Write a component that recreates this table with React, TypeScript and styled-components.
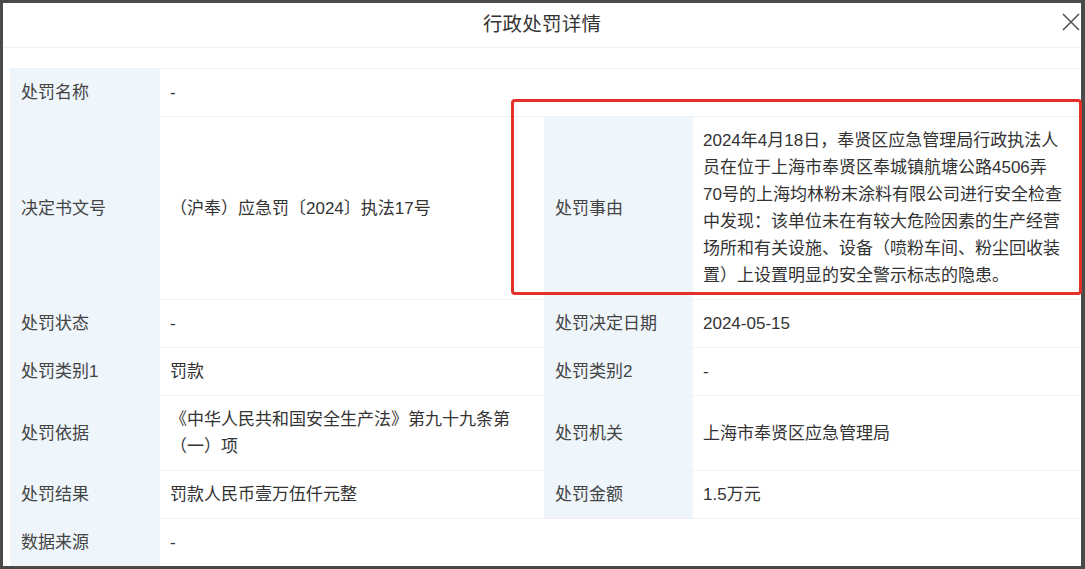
import styled, { createGlobalStyle } from "styled-components";

const GlobalStyle = createGlobalStyle`
  html, body {
    margin: 0;
    padding: 0;
    background: #4a4a4a;
    overflow: hidden;
  }
  body {
    font-family: "Liberation Sans", "Noto Sans CJK SC", sans-serif;
  }
`;

type Cell = { label: string; value: string | string[]; span?: boolean };

const rows: Cell[][] = [
    [{ label: '处罚名称', value: '-', span: true }],
    [
        { label: '决定书文号', value: '（沪奉）应急罚〔2024〕执法17号' },
        {
            label: '处罚事由',
            // kept as the lines shown in the record view
            value: [
                '2024年4月18日，奉贤区应急管理局行政执法人',
                '员在位于上海市奉贤区奉城镇航塘公路4506弄',
                '70号的上海均林粉末涂料有限公司进行安全检查',
                '中发现：该单位未在有较大危险因素的生产经营',
                '场所和有关设施、设备（喷粉车间、粉尘回收装',
                '置）上设置明显的安全警示标志的隐患。',
            ],
        },
    ],
    [
        { label: '处罚状态', value: '-' },
        { label: '处罚决定日期', value: '2024-05-15' },
    ],
    [
        { label: '处罚类别1', value: '罚款' },
        { label: '处罚类别2', value: '-' },
    ],
    [
        { label: '处罚依据', value: ['《中华人民共和国安全生产法》第九十九条第', '（一）项'] },
        { label: '处罚机关', value: '上海市奉贤区应急管理局' },
    ],
    [
        { label: '处罚结果', value: '罚款人民币壹万伍仟元整' },
        { label: '处罚金额', value: '1.5万元' },
    ],
    [{ label: '数据来源', value: '-', span: true }],
];

const CloseIcon = () => (
    <svg width="18" height="18" viewBox="0 0 18 18" fill="none">
        <path d="M1 1L17 17M17 1L1 17" stroke="#555" strokeWidth="1.6" />
    </svg>
);

const App = () => {
    return (
        <>
            <GlobalStyle />
            <Modal>
                <Header>
                    <span />
                    <Title>行政处罚详情</Title>
                    <CloseButton aria-label='close'>
                        <CloseIcon />
                    </CloseButton>
                </Header>
                <Body>
                    <DetailTable>
                        <colgroup>
                            <col style={{ width: 150 }} />
                            <col style={{ width: 384 }} />
                            <col style={{ width: 149 }} />
                            <col style={{ width: 386 }} />
                        </colgroup>
                        <tbody>
                            {rows.map((row, i) => (
                                <Row key={i}>
                                    {row.flatMap((cell) => [
                                        <Label key={cell.label + '-l'}>{cell.label}</Label>,
                                        <Value key={cell.label + '-v'} colSpan={cell.span ? 3 : 1}>
                                            {Array.isArray(cell.value)
                                                ? cell.value.map((line) => <Line key={line}>{line}</Line>)
                                                : cell.value}
                                        </Value>,
                                    ])}
                                </Row>
                            ))}
                        </tbody>
                    </DetailTable>
                    {/* annotation box drawn over the reason cell */}
                    <Highlight />
                </Body>
            </Modal>
        </>
    )
}

export default App

const Modal = styled.div`
    margin: 3px 4px 0 3px;
    height: 563px;
    background: #fff;
    display: flex;
    flex-direction: column;
`;

const Header = styled.div`
    height: 38px;
    padding-bottom: 6px;
    display: grid;
    grid-template-columns: 1fr auto 1fr;
    align-items: center;
    border-bottom: 1px solid #f1f2f4;
    flex-shrink: 0;
`;

const Title = styled.div`
    font-size: 19.5px;
    color: #333;
    letter-spacing: 0.2px;
`;

const CloseButton = styled.button`
    justify-self: end;
    margin-right: 1px;
    padding: 0;
    border: none;
    background: none;
    display: flex;
    cursor: pointer;
`;

const Body = styled.div`
    position: relative;
    padding: 20px 0 0 7px;
`;

const DetailTable = styled.table`
    width: 1069px;
    border-collapse: collapse;
    table-layout: fixed;
    font-size: 17px;
    line-height: 27px;
    color: #333;
    border-top: 1px solid #eef0f3;
`;

const Row = styled.tr`
    border-bottom: 1px solid #eef0f3;
`;

const Label = styled.td`
    background: #eef5fb;
    color: #444;
    padding: 10px 10px 10px 11px;
    vertical-align: middle;
`;

const Value = styled.td`
    background: #fff;
    padding: 10px;
    vertical-align: middle;
`;

const Line = styled.div`
    white-space: nowrap;
`;

const Highlight = styled.div`
    position: absolute;
    left: 508px;
    top: 51px;
    width: 565px;
    height: 190px;
    border: 3px solid #e3302b;
    border-radius: 4px;
    pointer-events: none;
`;
